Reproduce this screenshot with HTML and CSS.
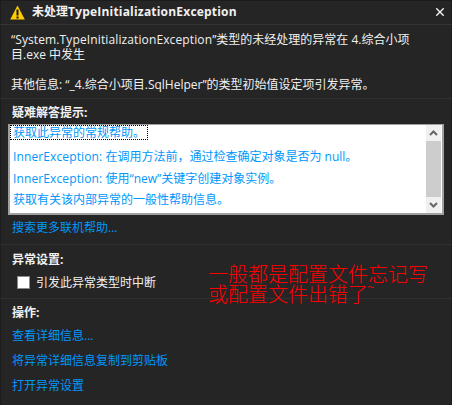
FILE: index.html
```html
<!DOCTYPE html>
<html lang="zh">
<head>
<meta charset="utf-8">
<title>未处理TypeInitializationException</title>
<link rel="stylesheet" href="styles.css">
</head>
<body>
<main class="dialog">
  <header class="titlebar">
    <svg class="warn" width="15" height="15" viewBox="0 0 15 15"><path d="M7.5 0.5 L14.8 14.5 H0.2 Z" fill="#ffcc00"/><rect x="6.5" y="4.5" width="2" height="6" fill="#1a1a1a"/><rect x="6.5" y="11.5" width="2" height="2" fill="#1a1a1a"/></svg>
    <h1 class="title">未处理<span class="lat">TypeInitializationException</span></h1>
    <svg class="close" width="8" height="8" viewBox="0 0 8 8"><path d="M0.3 0.3 L7.7 7.7 M7.7 0.3 L0.3 7.7" stroke="#f1f1f1" stroke-width="1.4" fill="none"/></svg>
  </header>
  <section class="message">
    <p>“<span class="lat">System.TypeInitializationException</span>”类型的未经处理的异常在 4.综合小项<br>目.exe 中发生</p>
    <p class="other">其他信息: “_4.综合小项目.SqlHelper”的类型初始值设定项引发异常。</p>
  </section>
  <section class="tips">
    <h2 class="heading">疑难解答提示:</h2>
    <div class="listbox">
      <ul class="list">
        <li class="item focused"><span>获取此异常的常规帮助。</span></li>
        <li class="item"><span class="lat">InnerException:</span> 在调用方法前，通过检查确定对象是否为 null。</li>
        <li class="item"><span class="lat">InnerException:</span> 使用“new”关键字创建对象实例。</li>
        <li class="item last">获取有关该内部异常的一般性帮助信息。</li>
      </ul>
      <div class="scrollbar">
        <div class="arrow"><svg width="9" height="6" viewBox="0 0 9 6"><path d="M1 5 L4.5 1.5 L8 5" stroke="#666" stroke-width="2" fill="none"/></svg></div>
        <div class="thumb"></div>
        <div class="arrow"><svg width="9" height="6" viewBox="0 0 9 6"><path d="M1 1 L4.5 4.5 L8 1" stroke="#666" stroke-width="2" fill="none"/></svg></div>
      </div>
    </div>
    <a class="link search">搜索更多联机帮助...</a>
  </section>
  <section class="settings">
    <h2 class="heading">异常设置:</h2>
    <label class="check"><span class="box"></span>引发此异常类型时中断</label>
  </section>
  <section class="actions">
    <h2 class="heading">操作:</h2>
    <a class="link first">查看详细信息...</a>
    <a class="link">将异常详细信息复制到剪贴板</a>
    <a class="link">打开异常设置</a>
  </section>
  <div class="note">一般都是配置文件忘记写<br>或配置文件出错了<span class="tilde">~</span></div>
</main>
</body>
</html>
```
FILE: styles.css
```css
* { box-sizing: border-box; }
html, body { margin: 0; padding: 0; }
body {
  width: 452px;
  height: 405px;
  overflow: hidden;
  background: #1a1a1a;
  font-family: "Open Sans", "Noto Sans CJK SC", sans-serif;
  font-size: 12px;
  color: #f1f1f1;
}
.dialog {
  position: relative;
  width: 452px;
  height: 405px;
  background: #252526;
  border-radius: 0 0 3px 3px;
  box-shadow: inset 1px 1px 0 #1c1c1c, inset -1px 0 0 #1c1c1c;
  display: flex;
  flex-direction: column;
}
.lat { letter-spacing: 0.12px; }
.titlebar {
  height: 25px;
  display: flex;
  align-items: center;
  padding: 0 8px 0 10px;
  border-bottom: 1px solid #333334;
}
.warn { margin-right: 7px; flex: none; }
.title { margin: 0; flex: 1; font-size: 12px; font-weight: 700; color: #f1f1f1; line-height: 18px; white-space: nowrap; }
.title .lat { letter-spacing: 0.2px; }
.message {
  height: 74px;
  padding: 7px 12px 0 11px;
  border-bottom: 1px solid #303031;
}
.message p { margin: 0; line-height: 15px; white-space: nowrap; }
.message .other { margin-top: 15px; }
.tips {
  height: 146px;
  padding: 5px 3px 0 8px;
  border-bottom: 1px solid #303031;
}
.heading { margin: 0 0 0 4px; font-size: 12px; font-weight: 700; line-height: 18px; color: #f1f1f1; }
.listbox {
  display: flex;
  height: 91px;
  margin: 2px 5px 0 0;
  background: #fff;
  border: 2px solid #a0a0a0;
  border-top-width: 1px;
}
.list { list-style: none; margin: 0; padding: 0; flex: 1; min-width: 0; color: #0097fb; }
.item { height: 22px; line-height: 20px; padding-left: 3px; white-space: nowrap; }
.item.last { line-height: 18px; }
.item.focused { height: 19px; margin-bottom: 3px; line-height: 17px; padding-left: 0; }
.focused span { display: inline-block; height: 15px; line-height: 16px; outline: 1px dotted #000; outline-offset: -1px; padding: 0 3px; vertical-align: top; }
.scrollbar { width: 15px; flex: none; display: flex; flex-direction: column; background: #f0f0f0; margin-right: 1px; }
.arrow { height: 16px; display: flex; align-items: center; justify-content: center; }
.thumb { flex: 1; background: #cdcdcd; }
.link { display: block; margin-left: 4px; color: #0097fb; line-height: 18px; }
.search { margin-top: 4px; }
.settings { height: 54px; padding: 6px 8px 0; border-bottom: 1px solid #303031; }
.check { display: flex; align-items: center; height: 18px; margin: 4px 0 0 9px; }
.box { width: 13px; height: 13px; margin-right: 6px; background: #fff; border: 1px solid #8a8a8a; }
.actions { padding: 5px 8px 0; flex: 1; }
.actions .link { margin-top: 7px; }
.actions .link.first { margin-top: 5px; }
.note {
  position: absolute;
  left: 208px;
  top: 264px;
  font-family: "Noto Sans CJK SC", sans-serif;
  font-size: 20px;
  line-height: 20px;
  font-weight: 300;
  color: #ff0000;
  white-space: nowrap;
}
.tilde { position: relative; top: -10px; font-size: 14px; margin-left: -1px; }
```
